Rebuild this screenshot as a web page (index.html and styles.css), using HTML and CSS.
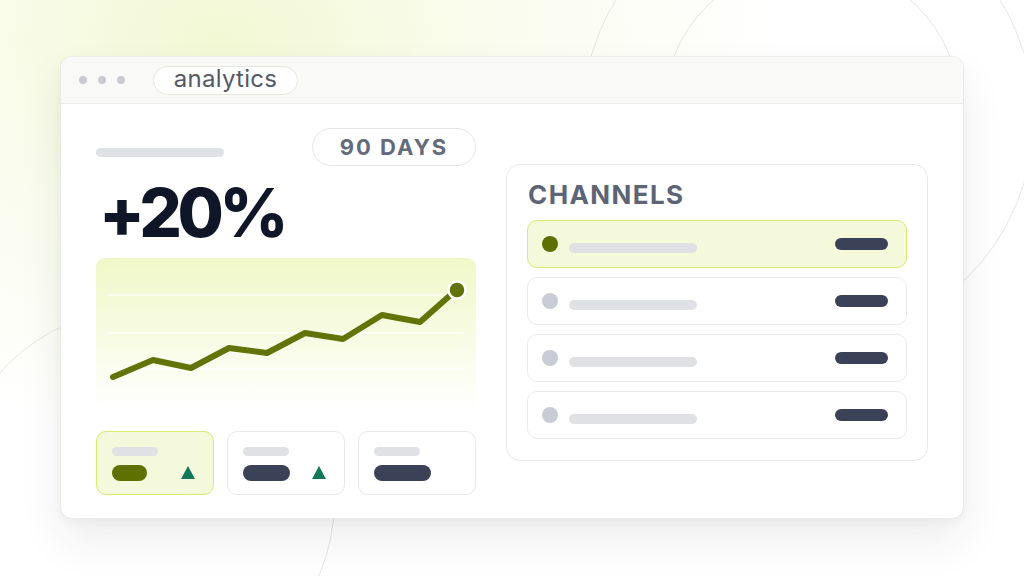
FILE: index.html
```html
<!DOCTYPE html>
<html lang="en">
<head>
<meta charset="utf-8">
<title>analytics</title>
<link rel="stylesheet" href="styles.css">
</head>
<body>
<div class="stage">
  <div class="ring ring-a"></div>
  <div class="ring ring-b"></div>
  <div class="ring ring-c"></div>

  <div class="window">
    <div class="titlebar">
      <div class="dots"><span></span><span></span><span></span></div>
      <div class="tab">analytics</div>
    </div>
    <div class="content">
      <section class="left">
        <div class="top-row">
          <div class="skel skel-title"></div>
          <div class="range">90 DAYS</div>
        </div>
        <div class="big">+20%</div>
        <div class="chart">
          <svg width="380" height="152" viewBox="0 0 380 152">
            <g stroke="#ffffff" stroke-width="1.5" opacity="0.9">
              <line x1="12" y1="37" x2="367" y2="37"/>
              <line x1="12" y1="75" x2="367" y2="75"/>
              <line x1="12" y1="111" x2="367" y2="111"/>
            </g>
            <polyline fill="none" stroke="#627409" stroke-width="6" stroke-linecap="round" stroke-linejoin="round"
              points="17,119 57,102 95,110 133,90 171,95 209,75 247,81 286,57 324,64 358,34"/>
            <circle cx="361" cy="32" r="8.5" fill="#627409" stroke="#ffffff" stroke-width="2.5"/>
          </svg>
        </div>
        <div class="cards">
          <div class="card active">
            <div class="skel skel-label"></div>
            <div class="card-row">
              <div class="pill olive" style="width:35px"></div>
              <div class="tri"></div>
            </div>
          </div>
          <div class="card">
            <div class="skel skel-label"></div>
            <div class="card-row">
              <div class="pill dark" style="width:47px"></div>
              <div class="tri"></div>
            </div>
          </div>
          <div class="card">
            <div class="skel skel-label"></div>
            <div class="card-row">
              <div class="pill dark" style="width:57px"></div>
            </div>
          </div>
        </div>
      </section>
      <section class="panel">
        <h2 class="panel-title">CHANNELS</h2>
        <div class="rows">
          <div class="row active"><span class="dot"></span><span class="skel bar"></span><span class="val"></span></div>
          <div class="row"><span class="dot"></span><span class="skel bar"></span><span class="val"></span></div>
          <div class="row"><span class="dot"></span><span class="skel bar"></span><span class="val"></span></div>
          <div class="row"><span class="dot"></span><span class="skel bar"></span><span class="val"></span></div>
        </div>
      </section>
    </div>
  </div>
</div>
</body>
</html>
```
FILE: styles.css
```css
* { box-sizing: border-box; }
html, body { margin: 0; padding: 0; }
body {
  width: 1024px;
  height: 576px;
  overflow: hidden;
  font-family: Inter, "Noto Sans", "Liberation Sans", sans-serif;
  background: #ffffff;
}
.stage {
  position: relative;
  width: 1024px;
  height: 576px;
  overflow: hidden;
  padding: 56px 0 0 60px;
  background:
    radial-gradient(ellipse 560px 400px at 220px 40px, #f2f8d4 0%, rgba(247,251,230,0.75) 45%, rgba(255,255,255,0) 100%),
    #ffffff;
}
.ring {
  position: absolute;
  border: 1.5px solid #e6e6e1;
  border-radius: 50%;
}
.ring-a { left: 582px; top: -108px; width: 452px; height: 452px; }
.ring-b { left: 663px; top: -38px; width: 298px; height: 298px; }
.ring-c { left: -49px; top: 308px; width: 384px; height: 384px; }

.window {
  position: relative;
  z-index: 1;
  width: 904px;
  height: 463px;
  background: #ffffff;
  border: 1px solid #eaeae5;
  border-radius: 12px;
  box-shadow: 0 22px 44px rgba(30, 35, 20, 0.08), 0 4px 10px rgba(30, 35, 20, 0.04);
  display: flex;
  flex-direction: column;
  overflow: hidden;
}
.titlebar {
  height: 47px;
  flex: none;
  background: #f9f9f7;
  border-bottom: 1.5px solid #ebebe7;
  display: flex;
  align-items: center;
  padding-left: 18px;
}
.dots { display: flex; gap: 11px; }
.dots span {
  width: 8px; height: 8px; border-radius: 50%;
  background: #c9cbd1;
}
.tab {
  margin-left: 28px;
  width: 145px;
  height: 29px;
  border: 1.5px solid #e7e7e2;
  border-radius: 15px;
  background: #ffffff;
  display: flex;
  align-items: center;
  justify-content: center;
  font-size: 24px;
  color: #535968;
  letter-spacing: 0.3px;
  padding-bottom: 3px;
}
.content {
  flex: 1;
  display: flex;
  padding: 0 35px 0 35px;
  gap: 30px;
}
.left {
  width: 380px;
  display: flex;
  flex-direction: column;
  padding-top: 24px;
}
.top-row {
  display: flex;
  justify-content: space-between;
  align-items: center;
  height: 38px;
}
.skel { background: #e0e1e5; border-radius: 5px; display: block; }
.skel-title { width: 128px; height: 9px; margin-top: 10px; }
.range {
  width: 164px;
  height: 38px;
  border: 1.5px solid #e7e7e2;
  border-radius: 19px;
  display: flex;
  align-items: center;
  justify-content: center;
  font-size: 22px;
  font-weight: 700;
  letter-spacing: 2px;
  color: #636a7a;
}
.big {
  margin-top: 14px;
  font-size: 67px;
  line-height: 66px;
  height: 66px;
  font-weight: 800;
  color: #0f1628;
  letter-spacing: -4.5px;
  padding-left: 3px;
}
.chart {
  margin-top: 12px;
  height: 152px;
  border-radius: 9px;
  background: linear-gradient(180deg, #f0f8c8 0%, #f6fbe0 45%, rgba(255,255,255,1) 100%);
}
.chart svg { display: block; }
.cards {
  margin-top: 21px;
  display: flex;
  gap: 13px;
}
.card {
  width: 118px;
  height: 64px;
  border: 1.5px solid #e8e8e4;
  border-radius: 10px;
  background: #ffffff;
  padding: 15px 18px 0 15px;
}
.card.active {
  background: #f3f9da;
  border-color: #d4ec6e;
}
.skel-label { width: 46px; height: 9px; }
.card-row {
  margin-top: 9px;
  display: flex;
  justify-content: space-between;
  align-items: center;
  height: 16px;
}
.pill { height: 16px; border-radius: 8px; }
.pill.olive { background: #5e7000; }
.pill.dark { background: #3b4258; }
.tri {
  width: 0; height: 0;
  border-left: 7.5px solid transparent;
  border-right: 7.5px solid transparent;
  border-bottom: 13px solid #12785a;
  margin-top: -1px;
}
.panel {
  margin-top: 60px;
  width: 422px;
  height: 297px;
  border: 1.5px solid #e8e8e4;
  border-radius: 14px;
  padding: 14px 20px 0 20px;
}
.panel-title {
  margin: 0;
  font-size: 26px;
  line-height: 31px;
  font-weight: 700;
  letter-spacing: 1.4px;
  color: #5d6475;
  padding-left: 1px;
}
.rows {
  margin-top: 10px;
  display: flex;
  flex-direction: column;
  gap: 9px;
}
.row {
  height: 48px;
  border: 1.5px solid #ebebe7;
  border-radius: 10px;
  display: flex;
  align-items: center;
  padding: 0 18px 0 14px;
}
.row.active {
  background: #f3f9da;
  border-color: #d4ec6e;
}
.dot {
  width: 16px; height: 16px; border-radius: 50%;
  background: #c9ccd4;
  flex: none;
}
.row.active .dot { background: #5e7000; }
.bar {
  width: 128px; height: 10px; border-radius: 5px;
  margin-left: 11px;
  margin-top: 8px;
}
.val {
  margin-left: auto;
  width: 53px; height: 12px; border-radius: 6px;
  background: #3b4258;
  margin-top: -1px;
}
```
